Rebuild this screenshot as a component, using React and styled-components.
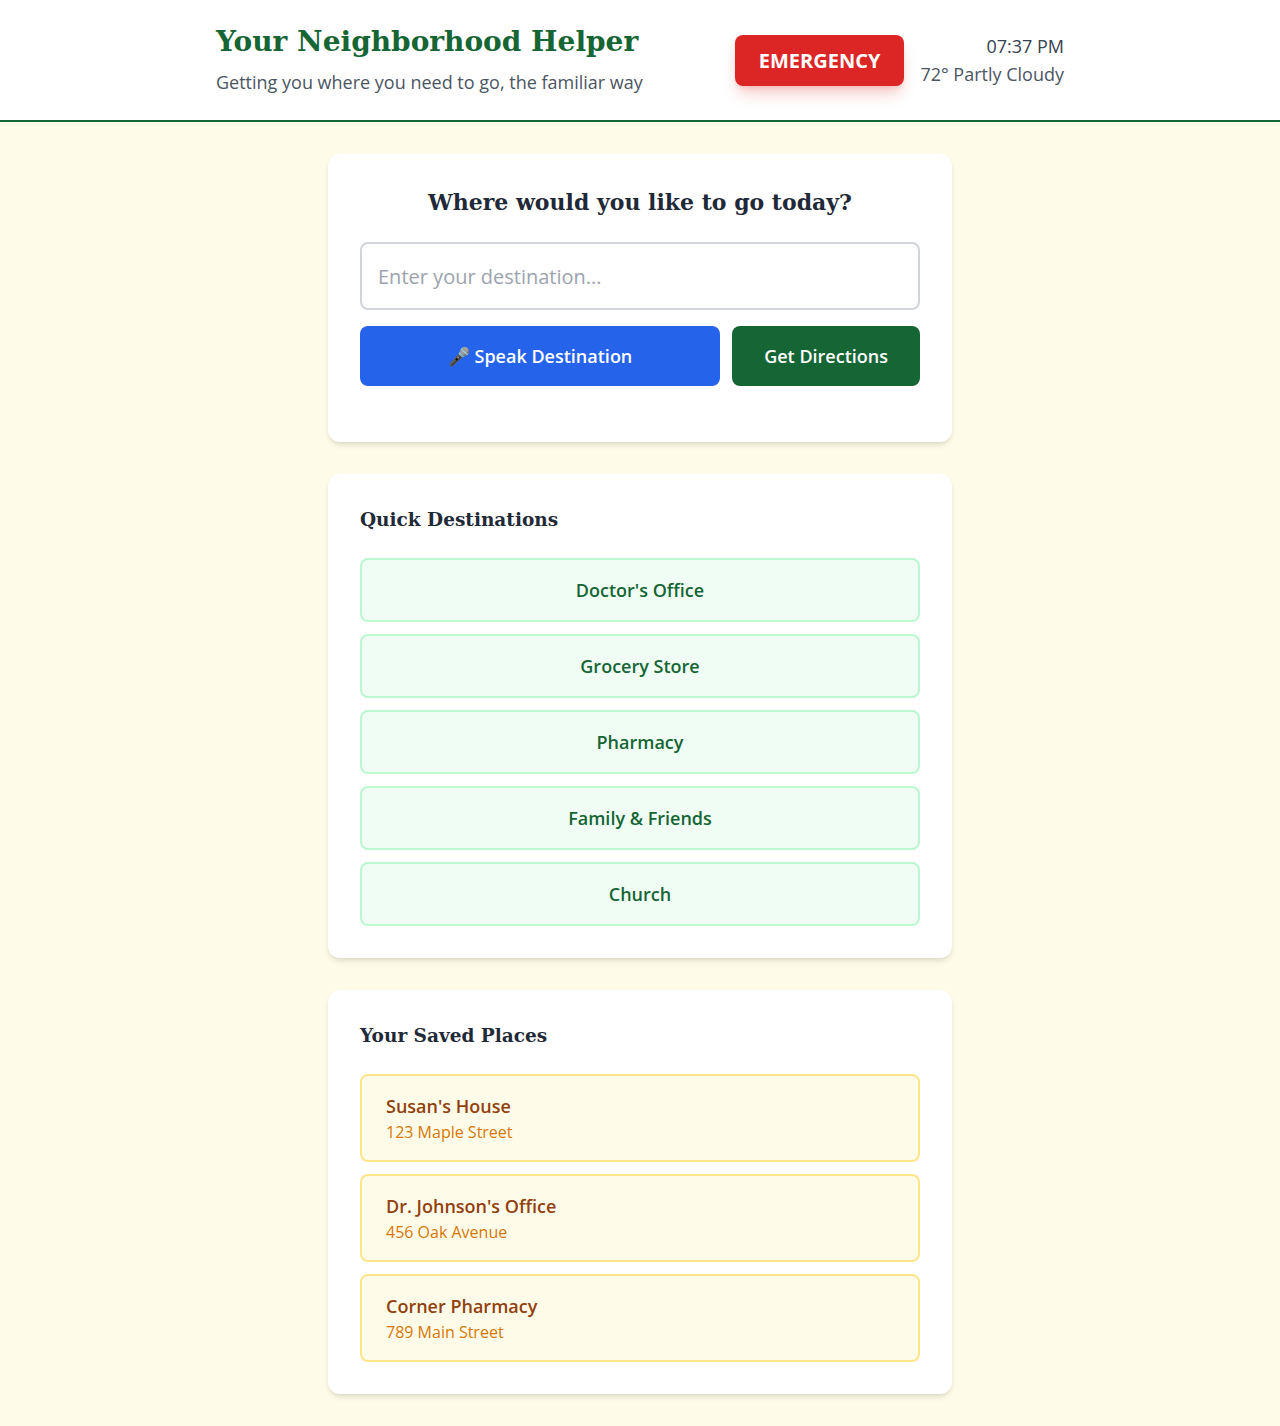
import styled, { createGlobalStyle } from 'styled-components';

const GlobalStyle = createGlobalStyle`
  * {
    box-sizing: border-box;
  }
  body {
    margin: 0;
    background: #fefce8;
    font-family: 'Open Sans', 'Noto Sans', sans-serif;
    color: #1f2937;
  }
`;

const quickDestinations = [
  "Doctor's Office",
  'Grocery Store',
  'Pharmacy',
  'Family & Friends',
  'Church'
];

const savedPlaces = [
  { name: "Susan's House", address: '123 Maple Street' },
  { name: "Dr. Johnson's Office", address: '456 Oak Avenue' },
  { name: 'Corner Pharmacy', address: '789 Main Street' }
];

const App = () => {
  return (
    <>
      <GlobalStyle />
      <Header>
        <HeaderInner>
          <div>
            <SiteTitle>Your Neighborhood Helper</SiteTitle>
            <Tagline>Getting you where you need to go, the familiar way</Tagline>
          </div>
          <HeaderRight>
            <EmergencyButton>EMERGENCY</EmergencyButton>
            <Status>
              <Time>07:37 PM</Time>
              <Weather>72° Partly Cloudy</Weather>
            </Status>
          </HeaderRight>
        </HeaderInner>
      </Header>

      <Main>
        <Card>
          <Question>Where would you like to go today?</Question>
          <DestinationInput placeholder="Enter your destination..." />
          <ButtonRow>
            <ActionButton $color="#2563eb" $grow>
              🎤 Speak Destination
            </ActionButton>
            <ActionButton $color="#166534">Get Directions</ActionButton>
          </ButtonRow>
        </Card>

        <Card>
          <SectionTitle>Quick Destinations</SectionTitle>
          <List>
            {quickDestinations.map(place => (
              <QuickButton key={place}>{place}</QuickButton>
            ))}
          </List>
        </Card>

        <Card>
          <SectionTitle>Your Saved Places</SectionTitle>
          <List>
            {savedPlaces.map(place => (
              <SavedPlace key={place.name}>
                <PlaceName>{place.name}</PlaceName>
                <PlaceAddress>{place.address}</PlaceAddress>
              </SavedPlace>
            ))}
          </List>
        </Card>
      </Main>
    </>
  );
};

const serif = `'DejaVu Serif', Georgia, serif`;

const Header = styled.header`
  background: #fff;
  border-bottom: 2px solid #166534;
`;

const HeaderInner = styled.div`
  max-width: 896px;
  margin: 0 auto;
  padding: 24px;
  display: flex;
  align-items: center;
  justify-content: space-between;
`;

const SiteTitle = styled.h1`
  margin: 0;
  font-family: ${serif};
  font-size: 28px;
  line-height: 36px;
  font-weight: 700;
  color: #166534;
`;

const Tagline = styled.p`
  margin: 8px 0 0;
  font-size: 18px;
  line-height: 28px;
  color: #4b5563;
`;

const HeaderRight = styled.div`
  display: flex;
  align-items: center;
  gap: 16px;
`;

const EmergencyButton = styled.button`
  background: #dc2626;
  color: #fff;
  border: none;
  border-radius: 8px;
  padding: 12px 24px;
  font-family: inherit;
  font-size: 20px;
  line-height: 27px;
  font-weight: 700;
  box-shadow: 0 10px 15px -3px rgba(220, 38, 38, 0.25),
    0 4px 6px -4px rgba(220, 38, 38, 0.25);
  cursor: pointer;
`;

const Status = styled.div`
  text-align: right;
  font-size: 18px;
  line-height: 28px;
`;

const Time = styled.div`
  color: #374151;
`;

const Weather = styled.div`
  color: #4b5563;
`;

const Main = styled.main`
  max-width: 672px;
  margin: 0 auto;
  padding: 32px 24px;
  display: flex;
  flex-direction: column;
  gap: 32px;
`;

const Card = styled.section`
  background: #fff;
  border-radius: 12px;
  padding: 32px;
  box-shadow: 0 4px 6px -1px rgba(0, 0, 0, 0.1), 0 2px 4px -2px rgba(0, 0, 0, 0.1);
`;

const Question = styled.h2`
  margin: 0 0 24px;
  text-align: center;
  font-family: ${serif};
  font-size: 22px;
  line-height: 32px;
  font-weight: 700;
  color: #1f2937;
`;

const DestinationInput = styled.input`
  display: block;
  width: 100%;
  height: 68px;
  padding: 0 16px;
  border: 2px solid #d1d5db;
  border-radius: 8px;
  font-family: inherit;
  font-size: 20px;
  color: #1f2937;
  outline: none;

  &::placeholder {
    color: #9ca3af;
  }
`;

const ButtonRow = styled.div`
  display: flex;
  gap: 12px;
  margin: 16px 0 24px;
`;

const ActionButton = styled.button`
  flex: ${p => (p.$grow ? '1' : '0 0 auto')};
  background: ${p => p.$color};
  color: #fff;
  border: none;
  border-radius: 8px;
  padding: 16px 32px;
  font-family: inherit;
  font-size: 18px;
  line-height: 28px;
  font-weight: 600;
  cursor: pointer;
`;

const SectionTitle = styled.h3`
  margin: 0 0 24px;
  font-family: ${serif};
  font-size: 18.5px;
  line-height: 28px;
  font-weight: 700;
  color: #1f2937;
`;

const List = styled.div`
  display: flex;
  flex-direction: column;
  gap: 12px;
`;

const QuickButton = styled.button`
  width: 100%;
  background: #f0fdf4;
  border: 2px solid #bbf7d0;
  border-radius: 8px;
  padding: 16px;
  font-family: inherit;
  font-size: 18px;
  line-height: 28px;
  font-weight: 600;
  color: #166534;
  cursor: pointer;
`;

const SavedPlace = styled.div`
  background: #fefce8;
  border: 2px solid #fde68a;
  border-radius: 8px;
  padding: 16px 24px;
`;

const PlaceName = styled.div`
  font-size: 18px;
  line-height: 28px;
  font-weight: 600;
  color: #92400e;
`;

const PlaceAddress = styled.div`
  font-size: 16px;
  line-height: 24px;
  color: #d97706;
`;

export default App;
